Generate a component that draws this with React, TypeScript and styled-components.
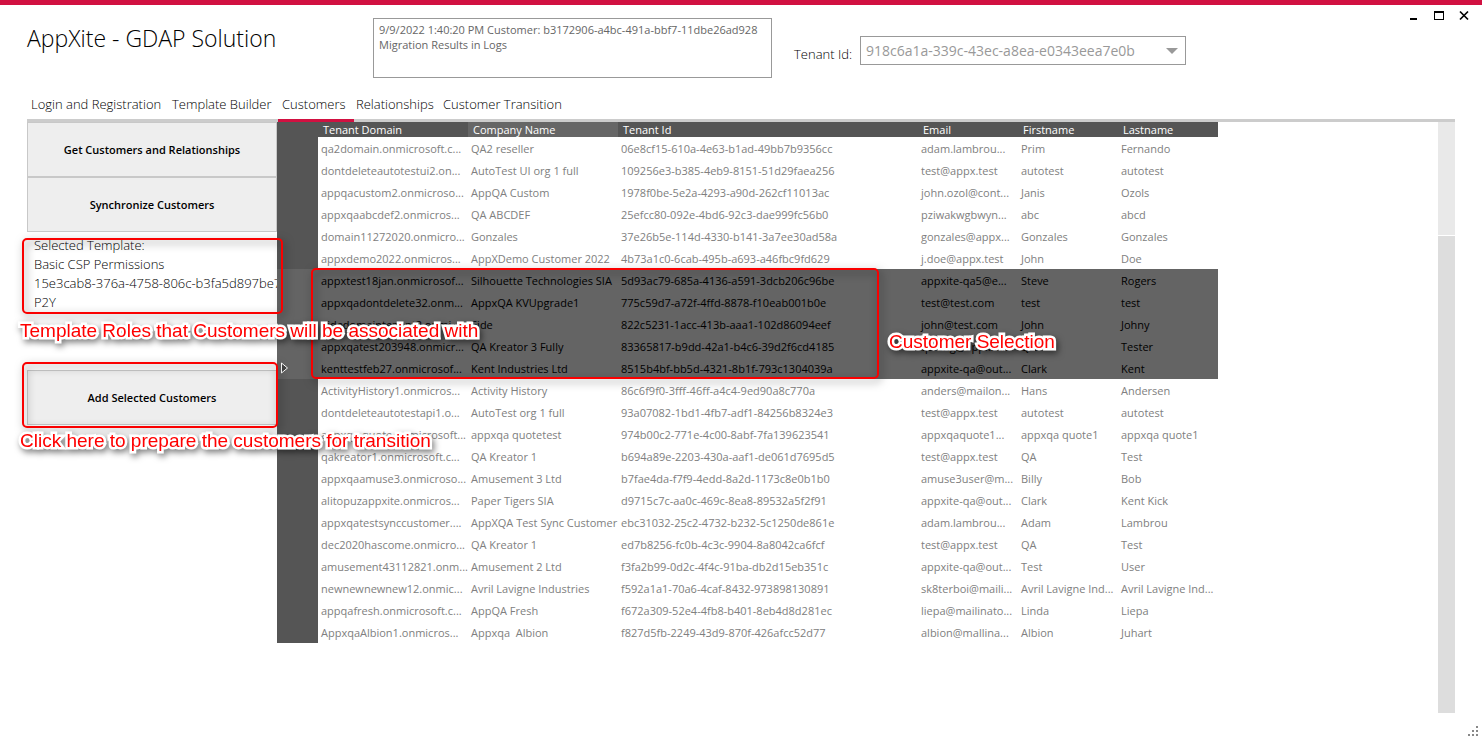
import React, { useState } from "react";
import styled, { createGlobalStyle, css } from "styled-components";

const GlobalStyle = createGlobalStyle`
  * { box-sizing: border-box; }
  body {
    margin: 0;
    background: #fff;
    color: #000;
    font-family: "Open Sans", "Noto Sans", sans-serif;
  }
`;

const Window = styled.div`
  position: relative;
  display: flex;
  flex-direction: column;
  min-height: 100vh;
  padding: 0 27px 27px;
  border-top: 5px solid #d11141;
`;

const Header = styled.header`
  display: flex;
  align-items: flex-start;
  height: 84px;
`;

const Title = styled.h1`
  flex: 0 0 346px;
  margin: 16px 0 0;
  font-size: 23px;
  line-height: 34px;
  font-weight: 300;
`;

const LogBox = styled.textarea`
  flex: 0 1 399px;
  height: 60px;
  margin: 13px 22px 0 0;
  padding: 3px 5px;
  border: 1px solid #999;
  resize: none;
  overflow: hidden;
  outline: none;
  color: #666;
  font-family: inherit;
  font-size: 11px;
  line-height: 15px;
`;

const TenantField = styled.div`
  display: flex;
  align-items: center;
  margin-top: 31px;
`;

const TenantLabel = styled.label`
  width: 66px;
  padding-top: 6px;
  font-size: 13px;
  line-height: 20px;
  font-weight: 300;
`;

const SelectWrap = styled.div`
  display: flex;
  align-items: center;
  position: relative;
  width: 326px;
`;

const TenantSelect = styled.select`
  width: 100%;
  height: 29px;
  padding: 0 30px 0 5px;
  border: 1px solid #999;
  border-radius: 0;
  background: #fff;
  appearance: none;
  outline: none;
  color: #999;
  font-family: inherit;
  font-size: 14px;
`;

const SelectArrow = styled.svg`
  position: absolute;
  right: 8px;
  pointer-events: none;
`;

const WindowButtons = styled.div`
  position: absolute;
  top: 4px;
  right: 10px;
  display: flex;
  gap: 9px;
`;

const WindowButton = styled.button`
  width: 16px;
  height: 14px;
  padding: 0;
  border: 0;
  background: none;
`;

const Tabs = styled.nav`
  display: flex;
  border-bottom: 3px solid #ccc;
`;

const Tab = styled.button<{ $width: number; $active: boolean }>`
  position: relative;
  width: ${(p) => p.$width}px;
  height: 30px;
  padding: 0 0 0 4px;
  border: 0;
  background: none;
  color: #000;
  font-family: inherit;
  font-size: 13px;
  line-height: 30px;
  font-weight: 300;
  text-align: left;
  white-space: nowrap;
  ${(p) =>
    p.$active &&
    css`
      &::after {
        content: "";
        position: absolute;
        left: 0;
        right: -2px;
        bottom: -3px;
        height: 3px;
        background: #d11141;
      }
    `}
`;

const Content = styled.main`
  display: flex;
  flex: 1;
`;

const Sidebar = styled.aside`
  flex: 0 0 250px;
  overflow: hidden;
`;

const ActionButton = styled.button`
  display: block;
  width: 100%;
  height: 55px;
  padding: 0;
  border: 1px solid #c8c8c8;
  background: #eee;
  color: #000;
  font-family: inherit;
  font-size: 11px;
  font-weight: 600;
`;

const TemplateInfo = styled.div`
  height: 138px;
  padding: 4px 0 0 7px;
  font-size: 13px;
  line-height: 19px;
  font-weight: 300;
  white-space: nowrap;
`;

const GridPane = styled.section`
  flex: 1;
  min-width: 0;
`;

const Table = styled.table`
  width: 941px;
  border-collapse: collapse;
  table-layout: fixed;
  font-size: 11px;
`;

const Column = styled.col<{ $width: number }>`
  width: ${(p) => p.$width}px;
`;

const HeadCell = styled.th<{ $hot?: boolean }>`
  height: 15px;
  padding: 0 0 0 5px;
  background: ${(p) => (p.$hot ? "#666" : "#555")};
  color: #fff;
  font-weight: 400;
  line-height: 15px;
  text-align: left;
`;

const Row = styled.tr<{ $selected: boolean }>`
  background: ${(p) => (p.$selected ? "#646464" : "#fff")};
  color: ${(p) => (p.$selected ? "#000" : "#808080")};
`;

const RowHead = styled.td<{ $selected: boolean }>`
  height: 22px;
  padding: 0 0 0 3px;
  background: ${(p) => (p.$selected ? "#646464" : "#555")};
  vertical-align: bottom;

  svg {
    display: block;
    margin-bottom: 5px;
  }
`;

const Cell = styled.td`
  height: 22px;
  padding: 2px 0 0 3px;
  line-height: 20px;
  white-space: pre;
`;

const Scrollbar = styled.div`
  display: flex;
  flex-direction: column;
  flex: 0 0 17px;
  gap: 1px;
`;

const ScrollTrack = styled.div`
  height: 113px;
  background: #e9e9e9;
`;

const ScrollThumb = styled.div`
  flex: 1;
  background: #ddd;
`;

const ResizeGrip = styled.svg`
  position: absolute;
  right: 4px;
  bottom: 4px;
`;

const Callout = styled.div<{ $x: number; $y: number; $w: number; $h: number }>`
  position: absolute;
  left: ${(p) => p.$x}px;
  top: ${(p) => p.$y}px;
  width: ${(p) => p.$w}px;
  height: ${(p) => p.$h}px;
  border: 2px solid #fa0000;
  border-radius: 5px;
  filter: drop-shadow(2px 3px 4px rgba(0, 0, 0, 0.5));
  pointer-events: none;
`;

const CalloutText = styled.div<{ $x: number; $y: number }>`
  position: absolute;
  left: ${(p) => p.$x}px;
  top: ${(p) => p.$y}px;
  color: #f00;
  font-family: "Liberation Sans", sans-serif;
  font-size: 19px;
  line-height: 22px;
  white-space: nowrap;
  -webkit-text-stroke: 5px #fff;
  paint-order: stroke fill;
  filter: drop-shadow(2px 3px 3px rgba(0, 0, 0, 0.5));
  pointer-events: none;
`;

const tabs = [
  { name: "Login and Registration", width: 141 },
  { name: "Template Builder", width: 110 },
  { name: "Customers", width: 74 },
  { name: "Relationships", width: 87 },
  { name: "Customer Transition", width: 130 },
];

const columns = [
  { name: "Tenant Domain", width: 150 },
  { name: "Company Name", width: 150 },
  { name: "Tenant Id", width: 300 },
  { name: "Email", width: 100 },
  { name: "Firstname", width: 100 },
  { name: "Lastname", width: 100 },
];

const customers = [
  ["qa2domain.onmicrosoft.c...", "QA2 reseller", "06e8cf15-610a-4e63-b1ad-49bb7b9356cc", "adam.lambrou...", "Prim", "Fernando"],
  ["dontdeleteautotestui2.on...", "AutoTest UI org 1 full", "109256e3-b385-4eb9-8151-51d29faea256", "test@appx.test", "autotest", "autotest"],
  ["appqacustom2.onmicroso...", "AppQA Custom", "1978f0be-5e2a-4293-a90d-262cf11013ac", "john.ozol@cont...", "Janis", "Ozols"],
  ["appxqaabcdef2.onmicros...", "QA ABCDEF", "25efcc80-092e-4bd6-92c3-dae999fc56b0", "pziwakwgbwyn...", "abc", "abcd"],
  ["domain11272020.onmicro...", "Gonzales", "37e26b5e-114d-4330-b141-3a7ee30ad58a", "gonzales@appx...", "Gonzales", "Gonzales"],
  ["appxdemo2022.onmicros...", "AppXDemo Customer 2022", "4b73a1c0-6cab-495b-a693-a46fbc9fd629", "j.doe@appx.test", "John", "Doe"],
  ["appxtest18jan.onmicrosof...", "Silhouette Technologies SIA", "5d93ac79-685a-4136-a591-3dcb206c96be", "appxite-qa5@e...", "Steve", "Rogers"],
  ["appxqadontdelete32.onm...", "AppxQA KVUpgrade1", "775c59d7-a72f-4ffd-8878-f10eab001b0e", "test@test.com", "test", "test"],
  ["eidedomaintenant2.onmi...", "Eide", "822c5231-1acc-413b-aaa1-102d86094eef", "john@test.com", "John", "Johny"],
  ["appxqatest203948.onmicr...", "QA Kreator 3 Fully", "83365817-b9dd-42a1-b4c6-39d2f6cd4185", "qa.eng@appx.x...", "QA", "Tester"],
  ["kenttestfeb27.onmicrosof...", "Kent Industries Ltd", "8515b4bf-bb5d-4321-8b1f-793c1304039a", "appxite-qa@out...", "Clark", "Kent"],
  ["ActivityHistory1.onmicros...", "Activity History", "86c6f9f0-3fff-46ff-a4c4-9ed90a8c770a", "anders@mailon...", "Hans", "Andersen"],
  ["dontdeleteautotestapi1.o...", "AutoTest org 1 full", "93a07082-1bd1-4fb7-adf1-84256b8324e3", "test@appx.test", "autotest", "autotest"],
  ["appxqa.quote.onmicrosoft...", "appxqa quotetest", "974b00c2-771e-4c00-8abf-7fa139623541", "appxqaquote1...", "appxqa quote1", "appxqa quote1"],
  ["qakreator1.onmicrosoft.c...", "QA Kreator 1", "b694a89e-2203-430a-aaf1-de061d7695d5", "test@appx.test", "QA", "Test"],
  ["appxqaamuse3.onmicroso...", "Amusement 3 Ltd", "b7fae4da-f7f9-4edd-8a2d-1173c8e0b1b0", "amuse3user@m...", "Billy", "Bob"],
  ["alitopuzappxite.onmicros...", "Paper Tigers SIA", "d9715c7c-aa0c-469c-8ea8-89532a5f2f91", "appxite-qa@out...", "Clark", "Kent Kick"],
  ["appxqatestsynccustomer....", "AppXQA Test Sync Customer", "ebc31032-25c2-4732-b232-5c1250de861e", "adam.lambrou...", "Adam", "Lambrou"],
  ["dec2020hascome.onmicro...", "QA Kreator 1", "ed7b8256-fc0b-4c3c-9904-8a8042ca6fcf", "test@appx.test", "QA", "Test"],
  ["amusement43112821.onm...", "Amusement 2 Ltd", "f3fa2b99-0d2c-4f4c-91ba-db2d15eb351c", "appxite-qa@out...", "Test", "User"],
  ["newnewnewnew12.onmic...", "Avril Lavigne Industries", "f592a1a1-70a6-4caf-8432-973898130891", "sk8terboi@maili...", "Avril Lavigne Ind...", "Avril Lavigne Ind..."],
  ["appqafresh.onmicrosoft.c...", "AppQA Fresh", "f672a309-52e4-4fb8-b401-8eb4d8d281ec", "liepa@mailinato...", "Linda", "Liepa"],
  ["AppxqaAlbion1.onmicros...", "Appxqa  Albion", "f827d5fb-2249-43d9-870f-426afcc52d77", "albion@mallina...", "Albion", "Juhart"],
];

const FIRST_SELECTED = 6;
const LAST_SELECTED = 10;

function CustomerTable() {
  return (
    <Table>
      <colgroup>
        <Column $width={41} />
        {columns.map((c) => (
          <Column key={c.name} $width={c.width} />
        ))}
      </colgroup>
      <thead>
        <tr>
          <HeadCell aria-label="Row" />
          {columns.map((c) => (
            <HeadCell key={c.name} scope="col" $hot={c.name === "Company Name"}>
              {c.name}
            </HeadCell>
          ))}
        </tr>
      </thead>
      <tbody>
        {customers.map((customer, i) => {
          const selected = i >= FIRST_SELECTED && i <= LAST_SELECTED;
          return (
            <Row key={customer[2]} $selected={selected} aria-selected={selected}>
              <RowHead $selected={selected}>
                {i === LAST_SELECTED && (
                  <svg width="9" height="12" viewBox="0 0 9 12" aria-hidden="true">
                    <path d="M1.5 1v10L7.5 6z" fill="#444" stroke="#fff" />
                  </svg>
                )}
              </RowHead>
              {customer.map((value, j) => (
                <Cell key={j}>{value}</Cell>
              ))}
            </Row>
          );
        })}
      </tbody>
    </Table>
  );
}

export default function App() {
  const [active, setActive] = useState("Customers");

  return (
    <>
      <GlobalStyle />
      <Window>
        <Header>
          <Title>AppXite - GDAP Solution</Title>
          <LogBox
            readOnly
            aria-label="Log"
            value={"9/9/2022 1:40:20 PM Customer: b3172906-a4bc-491a-bbf7-11dbe26ad928\nMigration Results in Logs"}
          />
          <TenantField>
            <TenantLabel htmlFor="tenant">Tenant Id:</TenantLabel>
            <SelectWrap>
              <TenantSelect id="tenant">
                <option>918c6a1a-339c-43ec-a8ea-e0343eea7e0b</option>
              </TenantSelect>
              <SelectArrow width="12" height="6" viewBox="0 0 12 6" aria-hidden="true">
                <path d="M0 0h12L6 6z" fill="#999" />
              </SelectArrow>
            </SelectWrap>
          </TenantField>
        </Header>
        <WindowButtons>
          <WindowButton aria-label="Minimize">
            <svg width="16" height="14" viewBox="0 0 16 14">
              <path d="M4 9h7v2H4z" />
            </svg>
          </WindowButton>
          <WindowButton aria-label="Maximize">
            <svg width="16" height="14" viewBox="0 0 16 14">
              <path d="M3 2h10v9H3zM4 4v6h8V4z" fillRule="evenodd" />
            </svg>
          </WindowButton>
          <WindowButton aria-label="Close">
            <svg width="16" height="14" viewBox="0 0 16 14">
              <path d="M4 2.5l8 8M12 2.5l-8 8" stroke="#000" strokeWidth="1.7" />
            </svg>
          </WindowButton>
        </WindowButtons>
        <Tabs>
          {tabs.map((t) => (
            <Tab key={t.name} $width={t.width} $active={t.name === active} onClick={() => setActive(t.name)}>
              {t.name}
            </Tab>
          ))}
        </Tabs>
        <Content>
          <Sidebar>
            <ActionButton>Get Customers and Relationships</ActionButton>
            <ActionButton>Synchronize Customers</ActionButton>
            <TemplateInfo>
              <div>Selected Template:</div>
              <div>Basic CSP Permissions</div>
              <div>15e3cab8-376a-4758-806c-b3fa5d897be7</div>
              <div>P2Y</div>
            </TemplateInfo>
            <ActionButton>Add Selected Customers</ActionButton>
          </Sidebar>
          <GridPane>
            <CustomerTable />
          </GridPane>
          <Scrollbar>
            <ScrollTrack />
            <ScrollThumb />
          </Scrollbar>
        </Content>
        <ResizeGrip width="10" height="10" viewBox="0 0 10 10" aria-hidden="true">
          <path d="M8 0h2v2H8zM4 4h2v2H4zM8 4h2v2H8zM0 8h2v2H0zM4 8h2v2H4zM8 8h2v2H8z" fill="#888" />
        </ResizeGrip>

        <Callout $x={22} $y={233} $w={261} $h={76} />
        <Callout $x={22} $y={357} $w={256} $h={66} />
        <Callout $x={311} $y={263} $w={568} $h={111} />
        <CalloutText $x={20} $y={315}>Template Roles that Customers will be associated with</CalloutText>
        <CalloutText $x={20} $y={425}>Click here to prepare the customers for transition</CalloutText>
        <CalloutText $x={889} $y={326}>Customer Selection</CalloutText>
      </Window>
    </>
  );
}
